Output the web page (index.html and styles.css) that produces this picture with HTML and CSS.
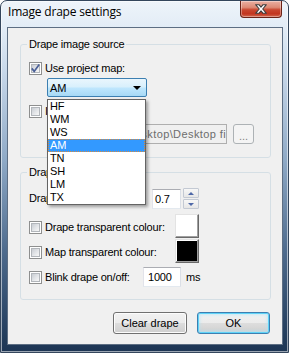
FILE: index.html
```html
<!DOCTYPE html>
<html lang="en">
<head>
    <meta charset="UTF-8">
    <title>Image drape settings</title>
    <link rel="stylesheet" href="styles.css">
</head>
<body>
    <div class="window">
        <div class="titlebar">
            <span class="title">Image drape settings</span>
            <div class="close-btn">
                <svg width="13" height="11" viewBox="0 0 13 11">
                    <path d="M1.5 1.5H4.6L6.5 3.8L8.4 1.5H11.5L8.1 5.5L11.5 9.5H8.4L6.5 7.2L4.6 9.5H1.5L4.9 5.5Z" fill="#fff" stroke="#3d3d3d" stroke-width="1" stroke-linejoin="round"/>
                </svg>
            </div>
        </div>

        <div class="client">
            <fieldset class="group group-source">
                <legend>Drape image source</legend>

                <div class="check-row">
                    <span class="checkbox">
                        <span class="box">
                            <svg width="9" height="9" viewBox="0 0 9 9">
                                <path d="M0.8 4.4L3.2 7.4L8.2 0.6" fill="none" stroke="#4a5f97" stroke-width="1.7"/>
                            </svg>
                        </span>
                    </span>
                    <span>Use project map:</span>
                </div>

                <div class="combo">
                    <span class="combo-value">AM</span>
                    <span class="combo-arrow"></span>
                    <ul class="combo-list">
                        <li>HF</li>
                        <li>WM</li>
                        <li>WS</li>
                        <li class="selected">AM</li>
                        <li>TN</li>
                        <li>SH</li>
                        <li>LM</li>
                        <li>TX</li>
                    </ul>
                </div>

                <div class="check-row row-file">
                    <span class="checkbox"><span class="box"></span></span>
                    <span>Image file:</span>
                </div>

                <div class="file-row">
                    <div class="edit edit-path disabled">C:\Users\Paul\Desktop\Desktop files\drape.png</div>
                    <button class="btn btn-browse" disabled>...</button>
                </div>
            </fieldset>

            <fieldset class="group group-display">
                <legend>Drape display</legend>

                <div class="row row-opacity">
                    <span class="row-label">Drape opacity:</span>
                    <div class="edit edit-opacity">0.7</div>
                    <div class="spin">
                        <span class="spin-btn up"></span>
                        <span class="spin-btn down"></span>
                    </div>
                </div>

                <div class="row row-colour">
                    <div class="check-row colour-label">
                        <span class="checkbox"><span class="box"></span></span>
                        <span>Drape transparent colour:</span>
                    </div>
                    <div class="swatch swatch-white"></div>
                </div>

                <div class="row row-colour row-map">
                    <div class="check-row colour-label">
                        <span class="checkbox"><span class="box"></span></span>
                        <span>Map transparent colour:</span>
                    </div>
                    <div class="swatch swatch-black"></div>
                </div>

                <div class="row row-blink">
                    <div class="check-row blink-label">
                        <span class="checkbox"><span class="box"></span></span>
                        <span>Blink drape on/off:</span>
                    </div>
                    <div class="edit edit-blink">1000</div>
                    <span class="unit">ms</span>
                </div>
            </fieldset>

            <div class="buttons">
                <button class="btn btn-clear">Clear drape</button>
                <button class="btn btn-default">OK</button>
            </div>
        </div>
    </div>
</body>
</html>
```

FILE: styles.css
```css
* {
    box-sizing: border-box;
}

body {
    margin: 0;
    font-family: 'Liberation Sans', Arial, sans-serif;
    font-size: 11px;
    letter-spacing: -0.2px;
    color: #000;
    background: #fff;
}

/* window frame */

.window {
    width: 289px;
    height: 353px;
    border: 1px solid #34465c;
    border-radius: 7px 7px 0 0;
    padding: 0 5px 7px 6px;
    display: flex;
    flex-direction: column;
    overflow: hidden;
    background: linear-gradient(180deg, #eef4fa 0, #e2ecf6 27px, #c8d8ea 70px, #8ea9c6 160px, #4e6b8d 250px, #253f5f 330px, #1c3452 353px);
    box-shadow: inset 0 0 0 1px rgba(255, 255, 255, 0.55);
}

.titlebar {
    height: 26px;
    flex-shrink: 0;
    display: flex;
    align-items: flex-start;
    justify-content: space-between;
}

.title {
    margin: 3px 0 0 1px;
    font-family: 'Open Sans', 'Noto Sans', sans-serif;
    font-size: 12px;
    line-height: 16px;
    letter-spacing: -0.2px;
    color: #000;
    text-shadow: 0 0 6px rgba(255, 255, 255, 0.9);
}

.close-btn {
    width: 42px;
    height: 17px;
    margin-right: 1px;
    display: flex;
    align-items: center;
    justify-content: center;
    border: 1px solid #6b2317;
    border-top: none;
    border-radius: 0 0 4px 4px;
    background: linear-gradient(180deg, #eab0a2 0%, #dd8a75 40%, #c9472f 55%, #c2351f 80%, #d26a50 100%);
    box-shadow: inset 0 0 0 1px rgba(255, 255, 255, 0.35);
}

.close-btn svg {
    width: 14px;
    height: 12px;
}

.client {
    height: 318px;
    flex-shrink: 0;
    border: 1px solid #5d6e83;
    background: #f0f0f0;
    padding: 0 11px 0 12px;
    display: flex;
    flex-direction: column;
}

/* group boxes */

.group {
    margin: 0;
    padding: 0 10px 0 8px;
    min-width: 0;
    border: 1px solid #d5dfe5;
    border-radius: 3px;
}

.group legend {
    margin-left: -2px;
    padding: 0 2px;
    line-height: 13px;
}

.group-source {
    margin-top: 10px;
    padding-top: 11px;
    padding-bottom: 13px;
}

.group-display {
    margin-top: 8px;
    padding-top: 9px;
    padding-bottom: 12px;
}

/* checkboxes */

.check-row {
    display: flex;
    align-items: center;
    height: 13px;
    line-height: 13px;
    white-space: nowrap;
}

.checkbox {
    width: 13px;
    height: 13px;
    flex-shrink: 0;
    margin-right: 3px;
    padding: 1px;
    border: 1px solid #8e8f8f;
    background: #fff;
}

.checkbox .box {
    display: block;
    width: 9px;
    height: 9px;
    border: 1px solid #b2b6bb;
    background: linear-gradient(135deg, #c9cdd3 0%, #e4e6e9 55%, #f7f7f7 100%);
}

.checkbox svg {
    display: block;
    margin: -1px;
    overflow: visible;
}

.row-file {
    margin-top: 8px;
}

/* combo box */

.combo {
    position: relative;
    z-index: 10;
    width: 100px;
    height: 19px;
    margin: 3px 0 0 18px;
    display: flex;
    align-items: center;
    padding: 0 5px 0 2px;
    border: 1px solid #3c7fb1;
    border-radius: 2px;
    background: linear-gradient(180deg, #eaf6fd 0%, #d9f0fc 45%, #bee6fd 55%, #a7d9f5 100%);
}

.combo-arrow {
    margin-left: auto;
    width: 0;
    height: 0;
    border-left: 4px solid transparent;
    border-right: 4px solid transparent;
    border-top: 4px solid #000;
}

.combo-list {
    position: absolute;
    top: 20px;
    left: -1px;
    width: 99px;
    margin: 0;
    padding: 0;
    list-style: none;
    background: #fff;
    border: 1px solid #646464;
    box-shadow: 2px 2px 3px rgba(0, 0, 0, 0.35);
}

.combo-list li {
    height: 13px;
    line-height: 13px;
    padding-left: 2px;
}

.combo-list li.selected {
    background: #3399ff;
    color: #fff;
    outline: 1px dotted #d88a3c;
    outline-offset: -1px;
}

/* edits and buttons */

.edit {
    height: 20px;
    line-height: 18px;
    padding: 0 2px;
    white-space: nowrap;
    overflow: hidden;
    background: #fff;
    border: 1px solid;
    border-color: #abadb3 #dbdfe6 #e3e9ef #e2e3ea;
}

.edit.disabled {
    background: #f0f0f0;
    border-color: #afafaf;
    color: #6d6d6d;
}

.file-row {
    display: flex;
    margin: 6px 0 0 18px;
}

.edit-path {
    width: 180px;
    letter-spacing: 0.4px;
}

.btn {
    padding: 0;
    font: inherit;
    color: #000;
    border: 1px solid #707070;
    border-radius: 3px;
    background: linear-gradient(180deg, #f2f2f2 0%, #ebebeb 50%, #dddddd 51%, #cfcfcf 100%);
    box-shadow: inset 0 0 0 1px #fcfcfc;
}

.btn-browse {
    width: 21px;
    height: 20px;
    margin-left: 6px;
    padding-top: 3px;
    line-height: 12px;
}

.btn-browse:disabled {
    color: #838383;
    border-color: #adb2b5;
    background: #f4f4f4;
    box-shadow: none;
}

.row {
    display: flex;
}

.row-opacity {
    align-items: flex-end;
}

.row-label {
    width: 123px;
    align-self: center;
    line-height: 13px;
}

.edit-opacity {
    width: 29px;
}

.spin {
    display: flex;
    flex-direction: column;
    gap: 1px;
    margin-left: 2px;
}

.spin-btn {
    width: 16px;
    height: 10px;
    display: flex;
    align-items: center;
    justify-content: center;
    border: 1px solid #c3c9d3;
    border-radius: 1px;
    background: linear-gradient(180deg, #f7f7f7, #e6e6e6);
}

.spin-btn::after {
    content: '';
    width: 0;
    height: 0;
    border-left: 3px solid transparent;
    border-right: 3px solid transparent;
}

.spin-btn.up::after {
    border-bottom: 3px solid #4e68a8;
}

.spin-btn.down::after {
    border-top: 3px solid #4e68a8;
}

.row-colour {
    margin-top: 5px;
    align-items: flex-start;
}

.row-map {
    margin-top: 1px;
}

.colour-label {
    width: 146px;
    margin-top: 7px;
}

.swatch {
    width: 24px;
    height: 24px;
    border: 1px solid;
    border-color: #e3e3e3 #696969 #696969 #e3e3e3;
    box-shadow: inset -1px -1px 0 #a0a0a0, inset 1px 1px 0 #fff;
}

.swatch-white {
    background: #fff;
}

.swatch-black {
    background: #000;
}

.row-blink {
    margin-top: 4px;
    align-items: center;
}

.blink-label {
    width: 114px;
}

.edit-blink {
    width: 38px;
    padding-left: 4px;
}

.unit {
    margin-left: 5px;
}

.buttons {
    display: flex;
    justify-content: flex-end;
    gap: 10px;
    margin-top: 12px;
    padding-right: 1px;
}

.buttons .btn {
    height: 22px;
}

.btn-clear {
    width: 74px;
}

.btn-default {
    width: 73px;
    border-color: #3c7fb1;
    box-shadow: inset 0 0 0 1px #5fd3f8, inset 0 0 3px 2px rgba(170, 230, 252, 0.6);
}
```
